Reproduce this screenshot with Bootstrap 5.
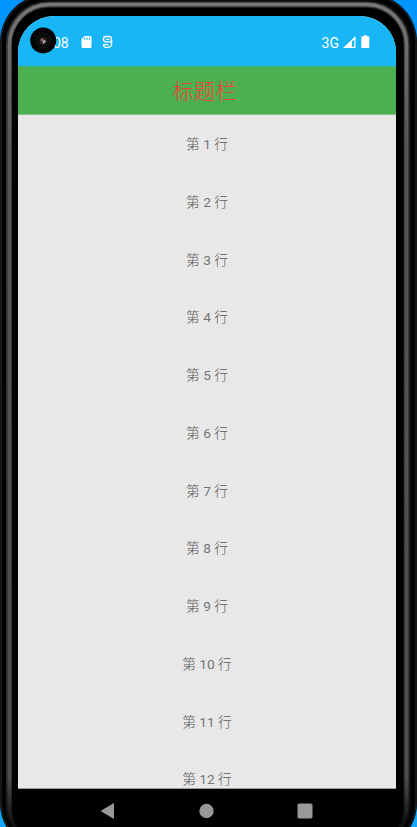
<!DOCTYPE html>
<html lang="zh-CN">
<head>
<meta charset="utf-8">
<meta name="viewport" content="width=device-width, initial-scale=1">
<title>标题栏</title>
<link href="https://cdn.jsdelivr.net/npm/bootstrap@5.3.0/dist/css/bootstrap.min.css" rel="stylesheet">
<style>
html,body{height:827px;overflow:hidden}
body{background:linear-gradient(180deg,#0094ff 0,#0a9dff 50%,#12a9fc 100%);font-family:Roboto,"Noto Sans CJK SC",sans-serif}
.phone{width:417px;height:827px;padding:16px 21px 0 18px}
.phone-frame{position:absolute;left:0;top:0;z-index:0}
.phone-screen{width:378px;height:773px;background:#e8e8e8;border-radius:36px 36px 0 0;z-index:1;border-bottom:1px solid #999}
.status-bar{height:50px;background:#18b6f6;color:#fff;font-size:14px;line-height:16px;padding:3px 25px 0 35px}
.camera{position:absolute;left:12px;top:11px}
.title-bar{height:49px;background:#4caf50;border-top:1px solid #3fb17d;border-bottom:1px solid #83c586;color:#f44336;font-size:21.5px;line-height:50px;padding-right:5px}
.title-bar,.line-item{font-family:Roboto,"Noto Sans CJK SC Light","Noto Sans CJK SC DemiLight","Noto Sans CJK SC",sans-serif;font-weight:300}
.line-item{height:57.75px;line-height:59.5px;font-size:13.7px;color:#585858}
.line-item span{font-weight:400;color:#757575}
.nav-keys{height:38px;padding:6px 83px 0 81px;z-index:1}
.status-icons{margin-top:-2px;margin-left:9px}
</style>
<script src="https://cdn.jsdelivr.net/npm/bootstrap@5.3.0/dist/js/bootstrap.bundle.min.js"></script>
</head>
<body>
<div class="phone position-relative overflow-hidden">
  <svg class="phone-frame" width="417" height="827" viewBox="0 0 417 827" aria-hidden="true">
    <defs>
      <linearGradient id="shade" x1="0" y1="0" x2="0" y2="827" gradientUnits="userSpaceOnUse">
        <stop offset="0" stop-color="#777"/><stop offset=".18" stop-color="#555"/><stop offset=".94" stop-color="#4c4c4c"/><stop offset=".995" stop-color="#101010"/>
      </linearGradient>
      <linearGradient id="edge" x1="0" y1="0" x2="0" y2="827" gradientUnits="userSpaceOnUse">
        <stop offset="0" stop-color="#343434"/><stop offset=".94" stop-color="#303030"/><stop offset=".995" stop-color="#080808"/>
      </linearGradient>
    </defs>
    <rect x="0" y="-6" width="417" height="857" rx="48" fill="#0a0a0a"/>
    <rect x="1" y="-5" width="415" height="855" rx="47" fill="none" stroke="#222"/>
    <rect x="4" y="-1.500" width="409" height="848" rx="44" fill="none" stroke="#000" stroke-width="3"/>
    <rect x="9" y="4.500" width="397.500" height="842" rx="40" fill="none" stroke="url(#edge)" stroke-width="6"/>
    <rect x="9.500" y="4.500" width="397" height="842" rx="40" fill="none" stroke="url(#shade)" stroke-width="3.500"/>
    <rect x="12" y="8" width="391.500" height="837" rx="37" fill="#000"/>
  </svg>
  <main class="phone-screen position-relative overflow-hidden">
    <div class="status-bar d-flex align-items-center">
      <span>08</span>
      <svg class="status-icons" width="42" height="16" viewBox="0 0 42 16" aria-hidden="true">
        <path d="M6.500 2H12q1.500 0 1.500 1.500v9Q13.500 14 12 14H5q-1.500 0-1.500-1.500V5z" fill="#fff"/>
        <path d="M6.700 3.500v2.300M9 3.500v2.300M11.300 3.500v2.300" stroke="#18b6f6" stroke-width="1.100"/>
        <path d="M33.500 7.800V4.500Q33.500 2.500 31 2.500H28Q25.500 2.500 25.500 5Q25.500 7.800 28 7.800H34.500M28 5.300H31.500M33.500 7.800V10Q33.500 13.400 29.500 13.400T25.500 10.700H30.500" fill="none" stroke="#fff" stroke-width="1.300"/>
      </svg>
      <span class="ms-auto">3G</span>
      <svg class="ms-1" style="margin-top:-1px" width="28" height="16" viewBox="0 0 28 16" aria-hidden="true">
        <path d="M0 14L12.500 2V14z" fill="#fff"/>
        <path d="M9 7.500V12.800H11.300V5.500z" fill="#18b6f6"/>
        <path d="M20.800 2.200V1.300h3v.9h1.500q1 0 1 1V13q0 1-1 1h-6q-1 0-1-1V3.200q0-1 1-1z" fill="#fff"/>
      </svg>
    </div>
    <svg class="camera" width="27" height="27" viewBox="0 0 27 27" aria-hidden="true">
      <circle cx="13.200" cy="13.400" r="13" fill="#020202"/>
      <circle cx="13.200" cy="13.400" r="8.500" fill="#0c0c0c"/>
      <circle cx="13.200" cy="13.900" r="3.600" fill="#352a28"/>
      <circle cx="12" cy="13" r="1.200" fill="#a87468"/>
      <circle cx="14.300" cy="14.400" r="1.300" fill="#9da7ad"/>
      <circle cx="13.500" cy="15.700" r=".7" fill="#eee"/>
    </svg>
    <h1 class="title-bar text-center m-0">标题栏</h1>
    <div class="text-center">
      <div class="line-item">第 <span>1</span> 行</div>
      <div class="line-item">第 <span>2</span> 行</div>
      <div class="line-item">第 <span>3</span> 行</div>
      <div class="line-item">第 <span>4</span> 行</div>
      <div class="line-item">第 <span>5</span> 行</div>
      <div class="line-item">第 <span>6</span> 行</div>
      <div class="line-item">第 <span>7</span> 行</div>
      <div class="line-item">第 <span>8</span> 行</div>
      <div class="line-item">第 <span>9</span> 行</div>
      <div class="line-item">第 <span>10</span> 行</div>
      <div class="line-item">第 <span>11</span> 行</div>
      <div class="line-item">第 <span>12</span> 行</div>
    </div>
  </main>
  <nav class="nav-keys position-relative d-flex justify-content-between align-items-center" aria-label="导航">
    <svg width="16" height="18" viewBox="0 0 16 18"><path d="M1.500 9L15 1V17z" fill="#999"/></svg>
    <svg width="16" height="16" viewBox="0 0 16 16"><circle cx="8.500" cy="8" r="7.200" fill="#999"/></svg>
    <svg width="16" height="16" viewBox="0 0 16 16"><rect x=".5" y=".5" width="15" height="15" rx="1.800" fill="#999"/></svg>
  </nav>
</div>
</body>
</html>
